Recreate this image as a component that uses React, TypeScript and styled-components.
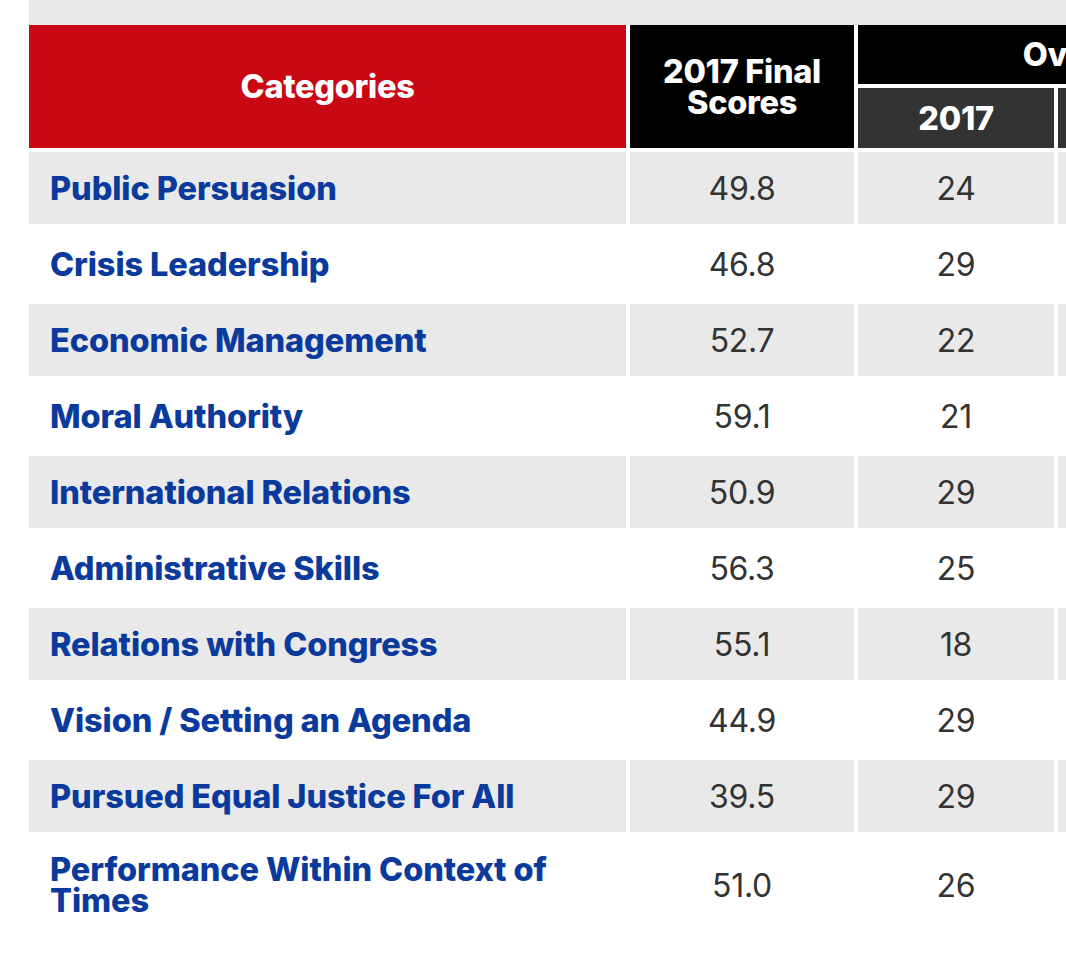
import React from "react";
import styled, { createGlobalStyle } from "styled-components";

const GlobalStyle = createGlobalStyle`
  html, body {
    margin: 0;
    padding: 0;
    background: #ffffff;
  }
  body {
    font-family: "Inter", "Liberation Sans", sans-serif;
  }
`;

const Page = styled.div`
  width: 1066px;
  height: 966px;
  overflow: hidden;
  padding-left: 29px;
  box-sizing: border-box;
`;

const TopBand = styled.div`
  height: 25px;
  width: 1600px;
  background: #e9e9e9;
`;

const Table = styled.table`
  border-collapse: separate;
  border-spacing: 4px;
  margin: -4px 0 0 -4px;
  table-layout: fixed;
  width: 1433px;
`;

const HeadCell = styled.th<{ $tone: "red" | "black" | "dark"; $h?: number }>`
  background: ${(p) =>
    p.$tone === "red" ? "#c90814" : p.$tone === "black" ? "#000000" : "#333333"};
  color: #ffffff;
  font-weight: 800;
  font-size: 32.5px;
  line-height: 31px;
  letter-spacing: -0.3px;
  text-align: center;
  vertical-align: middle;
  padding: 0 8px;
  height: ${(p) => (p.$h ? `${p.$h}px` : "auto")};
  box-sizing: border-box;
  white-space: nowrap;
`;

const Row = styled.tr<{ $striped: boolean }>`
  & > td {
    background: ${(p) => (p.$striped ? "#e9e9e9" : "#ffffff")};
  }
`;

const LabelCell = styled.td`
  color: #0a3a9c;
  font-weight: 800;
  font-size: 32.5px;
  line-height: 31px;
  letter-spacing: -0.1px;
  padding: 18px 20px 18px 21px;
  height: 72px;
  box-sizing: border-box;
  vertical-align: middle;
`;

const ValueCell = styled.td`
  color: #333333;
  font-weight: 400;
  font-size: 32px;
  line-height: 31px;
  letter-spacing: -0.3px;
  text-align: center;
  vertical-align: middle;
  padding: 18px 8px;
  box-sizing: border-box;
`;

type Item = { name: string; score: string; rank: string };

const items: Item[] = [
  { name: "Public Persuasion", score: "49.8", rank: "24" },
  { name: "Crisis Leadership", score: "46.8", rank: "29" },
  { name: "Economic Management", score: "52.7", rank: "22" },
  { name: "Moral Authority", score: "59.1", rank: "21" },
  { name: "International Relations", score: "50.9", rank: "29" },
  { name: "Administrative Skills", score: "56.3", rank: "25" },
  { name: "Relations with Congress", score: "55.1", rank: "18" },
  { name: "Vision / Setting an Agenda", score: "44.9", rank: "29" },
  { name: "Pursued Equal Justice For All", score: "39.5", rank: "29" },
  { name: "Performance Within Context of Times", score: "51.0", rank: "26" },
];

export default function App() {
  return (
    <>
      <GlobalStyle />
      <Page>
        <TopBand />
        <Table>
          <colgroup>
            <col style={{ width: 597 }} />
            <col style={{ width: 224 }} />
            <col style={{ width: 196 }} />
            <col style={{ width: 196 }} />
            <col style={{ width: 196 }} />
          </colgroup>
          <thead>
            <tr>
              <HeadCell $tone="red" rowSpan={2}>
                Categories
              </HeadCell>
              <HeadCell $tone="black" rowSpan={2}>
                2017 Final
                <br />
                Scores
              </HeadCell>
              <HeadCell $tone="black" colSpan={3} $h={59}>
                Overall Rankings
              </HeadCell>
            </tr>
            <tr>
              <HeadCell $tone="dark" $h={60}>
                2017
              </HeadCell>
              <HeadCell $tone="dark" $h={60}>
                2010
              </HeadCell>
              <HeadCell $tone="dark" $h={60}>
                2002
              </HeadCell>
            </tr>
          </thead>
          <tbody>
            {items.map((it, i) => (
              <Row key={it.name} $striped={i % 2 === 0}>
                <LabelCell>{it.name}</LabelCell>
                <ValueCell>{it.score}</ValueCell>
                <ValueCell>{it.rank}</ValueCell>
                <ValueCell />
                <ValueCell />
              </Row>
            ))}
          </tbody>
        </Table>
      </Page>
    </>
  );
}
